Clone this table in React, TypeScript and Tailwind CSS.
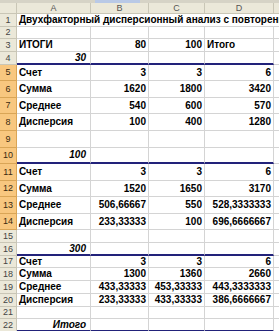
import React from "react";

type Cell = { t?: string; align?: "l" | "r"; italic?: boolean };

const rowHeights: Record<number, number> = {
  1: 13, 2: 12, 3: 13, 4: 13,
  5: 16, 6: 17, 7: 16, 8: 17, 9: 17, 10: 16, 11: 17, 12: 16, 13: 17, 14: 16,
  15: 13, 16: 13, 17: 12, 18: 13, 19: 13, 20: 13, 21: 12, 22: 13,
};

const data: Record<number, Cell[]> = {
  3: [{ t: "ИТОГИ" }, { t: "80", align: "r" }, { t: "100", align: "r" }, { t: "Итого" }],
  4: [{ t: "30", align: "r", italic: true }, {}, {}, {}],
  5: [{ t: "Счет" }, { t: "3", align: "r" }, { t: "3", align: "r" }, { t: "6", align: "r" }],
  6: [{ t: "Сумма" }, { t: "1620", align: "r" }, { t: "1800", align: "r" }, { t: "3420", align: "r" }],
  7: [{ t: "Среднее" }, { t: "540", align: "r" }, { t: "600", align: "r" }, { t: "570", align: "r" }],
  8: [{ t: "Дисперсия" }, { t: "100", align: "r" }, { t: "400", align: "r" }, { t: "1280", align: "r" }],
  10: [{ t: "100", align: "r", italic: true }, {}, {}, {}],
  11: [{ t: "Счет" }, { t: "3", align: "r" }, { t: "3", align: "r" }, { t: "6", align: "r" }],
  12: [{ t: "Сумма" }, { t: "1520", align: "r" }, { t: "1650", align: "r" }, { t: "3170", align: "r" }],
  13: [{ t: "Среднее" }, { t: "506,66667", align: "r" }, { t: "550", align: "r" }, { t: "528,3333333", align: "r" }],
  14: [{ t: "Дисперсия" }, { t: "233,33333", align: "r" }, { t: "100", align: "r" }, { t: "696,6666667", align: "r" }],
  16: [{ t: "300", align: "r", italic: true }, {}, {}, {}],
  17: [{ t: "Счет" }, { t: "3", align: "r" }, { t: "3", align: "r" }, { t: "6", align: "r" }],
  18: [{ t: "Сумма" }, { t: "1300", align: "r" }, { t: "1360", align: "r" }, { t: "2660", align: "r" }],
  19: [{ t: "Среднее" }, { t: "433,33333", align: "r" }, { t: "453,33333", align: "r" }, { t: "443,3333333", align: "r" }],
  20: [{ t: "Дисперсия" }, { t: "233,33333", align: "r" }, { t: "433,33333", align: "r" }, { t: "386,6666667", align: "r" }],
  22: [{ t: "Итого", align: "r", italic: true }, {}, {}, {}],
};

const blueRows = new Set([4, 10, 16, 22]);
const widths = ["w-[74px]", "w-[58px]", "w-[56px]", "w-[69px]"];

function Row({ n }: { n: number }) {
  const h = rowHeights[n];
  const sel = n >= 5 && n <= 14;
  const cells = data[n] ?? [{}, {}, {}, {}];
  return (
    <div className="flex shrink-0" style={{ height: h }}>
      <div
        className={`w-[17px] shrink-0 flex items-center justify-center border-r border-b text-[9px] leading-none ${
          sel ? "bg-[#f8c77f] border-[#d9a556] text-[#3a2a10]" : "bg-[#ebe8d9] border-[#c9c6b6] text-[#444]"
        }`}
      >
        {n}
      </div>
      {n === 1 ? (
        <div className="flex-1 flex items-center border-b border-[#d4d4d4] pl-[2px] whitespace-nowrap overflow-hidden font-bold text-[10px] leading-none text-black">
          Двухфакторный дисперсионный анализ с повторениями
        </div>
      ) : (
        <>
          {cells.map((c, i) => (
            <div
              key={i}
              className={`${widths[i]} shrink-0 flex items-center border-r border-[#d4d4d4] px-[2px] whitespace-nowrap overflow-hidden font-bold text-[10px] leading-none text-black ${
                c.align === "r" ? "justify-end" : "justify-start"
              } ${c.italic ? "italic pr-[4px]" : ""} ${
                blueRows.has(n) ? "border-b-2 border-b-[#22227a]" : "border-b border-b-[#d4d4d4]"
              }`}
            >
              {c.t}
            </div>
          ))}
          <div className="flex-1 border-b border-[#d4d4d4]" />
        </>
      )}
    </div>
  );
}

export default function App() {
  const rows = Array.from({ length: 22 }, (_, i) => i + 1);
  return (
    <div
      className="w-[279px] h-[331px] overflow-hidden bg-white flex flex-col"
      style={{ fontFamily: '"Liberation Sans", Arial, sans-serif' }}
    >
      <div className="h-[3px] shrink-0 flex">
        <div className="w-[95px] bg-[#d6d3c6]" />
        <div className="w-[45px] bg-[#b9c9e6]" />
        <div className="flex-1 bg-[#d6d3c6]" />
      </div>
      <div className="h-[11px] shrink-0 flex text-[9px] leading-none text-[#555]">
        <div className="w-[17px] shrink-0 bg-[#ebe8d9] border-r border-b border-[#c9c6b6]" />
        {["A", "B", "C", "D"].map((l, i) => (
          <div
            key={l}
            className={`${widths[i]} shrink-0 flex items-center justify-center bg-[#ebe8d9] border-r border-b border-[#c9c6b6]`}
          >
            {l}
          </div>
        ))}
        <div className="flex-1 bg-[#ebe8d9] border-b border-[#c9c6b6]" />
      </div>
      {rows.map((n) => (
        <Row key={n} n={n} />
      ))}
    </div>
  );
}
